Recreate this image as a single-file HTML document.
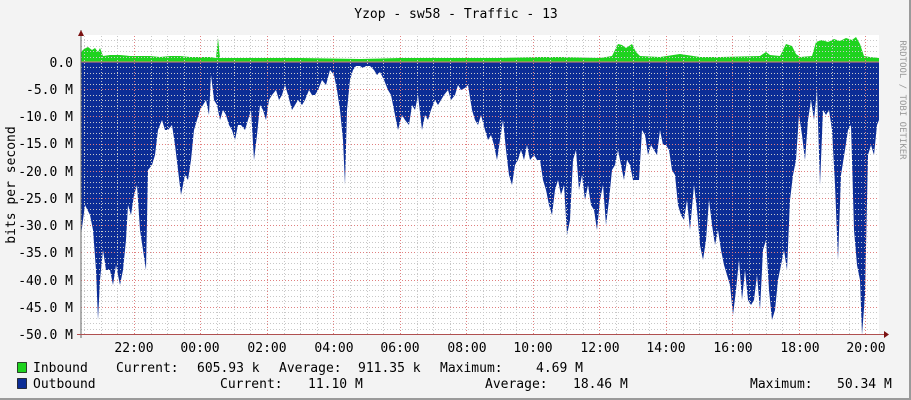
<!DOCTYPE html>
<html><head><style>
body{margin:0;background:#f3f3f3}
svg{display:block}
text{font-family:"DejaVu Sans Mono","Liberation Mono",monospace;font-size:13px;fill:#000}
</style></head><body>
<svg width="911" height="400" xmlns="http://www.w3.org/2000/svg">
<rect x="0" y="0" width="911" height="400" fill="#f3f3f3"/>
<rect x="909" y="0" width="2" height="400" fill="#9a9a9a"/>
<rect x="0" y="398" width="911" height="2" fill="#9a9a9a"/>
<rect x="81" y="35" width="798" height="299" fill="#fff"/>
<polygon fill="#1ed31e" points="81,62 81,52 84,49 88,47 92,50 95,48 98,52 100,48 103,56 110,55 120,55 130,56 140,56 150,56 160,57 170,56 180,56 190,57 200,57 210,57 216,58 218,38 220,58 230,58 300,58 360,59 400,58 450,58 500,58 540,57 560,57 600,58 612,56 618,44 622,45 626,48 632,44 636,52 640,56 660,57 680,54 700,57 720,57 760,56 766,52 770,55 780,56 786,44 792,46 796,54 800,57 812,56 816,42 822,40 828,42 834,39 840,41 846,38 852,40 856,37 860,44 864,56 870,57 879,58 879,62"/>
<polygon fill="#0c2d96" points="81,62 81,235 85,205 90,215 93,230 96,270 98,320 100,280 103,250 106,270 110,270 113,285 116,265 120,285 123,270 126,240 128,205 131,215 134,195 137,185 140,230 143,250 146,270 148,170 152,165 155,155 158,130 162,120 165,130 168,130 172,125 175,145 178,170 181,195 185,175 188,180 191,160 194,130 197,120 200,110 203,105 206,100 209,115 211,75 214,100 217,105 220,120 223,110 226,115 229,125 232,130 235,140 238,125 241,125 245,130 248,120 251,110 254,160 257,135 260,105 263,110 266,120 269,100 272,95 276,90 279,100 282,95 285,85 288,95 292,110 295,105 298,100 302,105 305,100 309,90 312,95 315,95 318,90 322,80 326,85 330,70 334,75 337,90 340,110 343,140 345,185 347,110 350,80 353,70 356,66 360,66 363,68 366,66 370,66 374,70 377,75 380,72 384,80 388,90 391,95 394,110 398,130 402,115 405,120 409,125 412,105 415,110 418,95 422,130 425,115 428,120 431,110 435,100 438,105 441,100 444,95 448,90 451,100 455,95 458,85 461,90 465,88 468,85 472,110 475,120 478,125 481,115 485,130 488,140 491,135 494,145 497,160 500,140 503,120 506,150 509,175 512,185 515,165 518,160 521,150 524,160 527,145 530,160 534,155 537,160 540,160 543,180 546,190 549,205 552,215 555,190 558,180 561,195 564,185 567,235 570,220 573,160 576,150 579,190 582,175 585,200 588,185 591,205 594,210 597,230 600,200 603,185 606,225 609,200 612,170 615,165 618,150 621,165 624,180 627,160 630,165 633,180 636,180 639,180 642,130 645,135 648,155 651,145 654,150 657,155 660,130 663,145 666,145 669,150 672,170 675,175 678,205 681,215 684,220 687,200 690,230 694,185 697,210 700,245 703,260 706,240 709,200 712,225 715,245 718,230 721,250 724,265 727,275 730,285 733,315 736,290 739,260 742,300 745,270 748,300 751,305 754,300 757,275 760,310 763,250 766,240 769,290 772,320 775,310 778,280 781,265 784,250 787,270 790,200 793,175 796,160 799,115 802,135 805,160 808,120 811,100 814,120 817,90 820,185 823,110 826,115 829,110 832,130 835,185 838,260 841,175 845,150 848,130 851,125 854,230 857,265 860,280 862,335 865,295 868,155 871,145 874,155 877,125 879,120 879,62"/>
<g id="grid2"></g>
<line x1="81" y1="62" x2="879" y2="62" stroke="#e08080" stroke-width="1"/>
<line x1="81" y1="30" x2="81" y2="338" stroke="#666"/>
<polygon points="78,36 84,36 81,30" fill="#7a1010"/>
<line x1="77" y1="334.5" x2="884" y2="334.5" stroke="#b05050"/>
<polygon points="884,331 884,338 889,334.5" fill="#7a1010"/>
<text x="456" y="18" text-anchor="middle">Yzop - sw58 - Traffic - 13</text>
<g text-anchor="end">
<text x="73" y="67">0.0</text>
<text x="73" y="94">-5.0 M</text>
<text x="73" y="121">-10.0 M</text>
<text x="73" y="148">-15.0 M</text>
<text x="73" y="176">-20.0 M</text>
<text x="73" y="203">-25.0 M</text>
<text x="73" y="230">-30.0 M</text>
<text x="73" y="257">-35.0 M</text>
<text x="73" y="285">-40.0 M</text>
<text x="73" y="312">-45.0 M</text>
<text x="73" y="339">-50.0 M</text>
</g>
<text transform="translate(15,185) rotate(-90)" text-anchor="middle">bits per second</text>
<text transform="translate(900,100) rotate(90)" text-anchor="middle" style="font-size:9px;fill:#999">RRDTOOL / TOBI OETIKER</text>
<g text-anchor="middle">
<text x="134" y="352">22:00</text><text x="200" y="352">00:00</text><text x="267" y="352">02:00</text><text x="334" y="352">04:00</text><text x="400" y="352">06:00</text><text x="467" y="352">08:00</text><text x="533" y="352">10:00</text><text x="600" y="352">12:00</text><text x="666" y="352">14:00</text><text x="733" y="352">16:00</text><text x="800" y="352">18:00</text><text x="866" y="352">20:00</text>
</g>
<rect x="17.5" y="362.5" width="9" height="10" fill="#1ed31e" stroke="#000" stroke-width="0.7"/>
<rect x="17.5" y="378.5" width="9" height="10" fill="#0c2d96" stroke="#000" stroke-width="0.7"/>
<text x="33" y="372">Inbound</text>
<text x="116" y="372">Current:</text>
<text x="197" y="372">605.93 k</text>
<text x="279" y="372">Average:</text>
<text x="358" y="372">911.35 k</text>
<text x="440" y="372">Maximum:</text>
<text x="536" y="372">4.69 M</text>
<text x="33" y="388">Outbound</text>
<text x="220" y="388">Current:</text>
<text x="308" y="388">11.10 M</text>
<text x="485" y="388">Average:</text>
<text x="573" y="388">18.46 M</text>
<text x="750" y="388">Maximum:</text>
<text x="837" y="388">50.34 M</text>
</svg>
<script>
(function(){
var g=document.getElementById("grid2"),s="";
for(var i=1;i<50;i++){var y=62+i*5.44;var maj=i%5==0;
s+='<line x1="81" x2="879" y1="'+(Math.round(y)+.5)+'" y2="'+(Math.round(y)+.5)+'" stroke="'+(maj?'#e08080':'#c8c8c8')+'" stroke-dasharray="1,2" stroke-width="1"/>';}
for(var j=-5;j<0;j++){var y2=62+j*5.44;if(y2<36)continue;s+='<line x1="81" x2="879" y1="'+(Math.round(y2)+.5)+'" y2="'+(Math.round(y2)+.5)+'" stroke="#c8c8c8" stroke-dasharray="1,2"/>';}
for(var x=84;x<879;x+=16.625){var k=Math.round((x-134)/16.625);var maj=(k%4==0);
s+='<line y1="36" y2="334" x1="'+(Math.round(x)+.5)+'" x2="'+(Math.round(x)+.5)+'" stroke="'+(maj?'#e08080':'#c8c8c8')+'" stroke-dasharray="1,2"/>';}
g.innerHTML=s;
})();
</script>
</body></html>
